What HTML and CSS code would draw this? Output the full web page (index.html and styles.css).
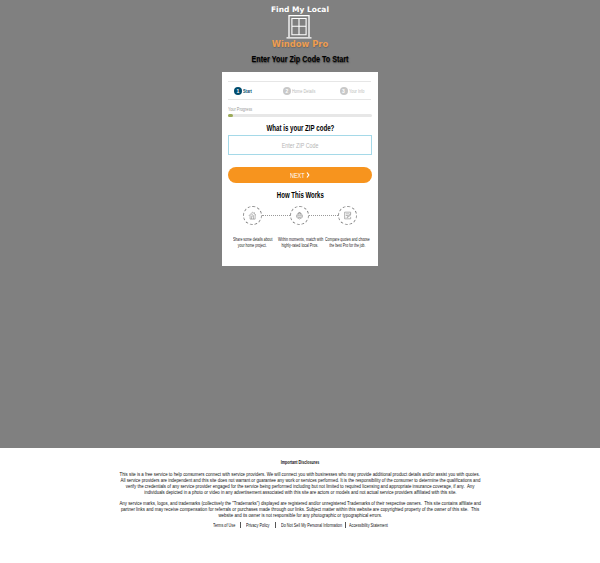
FILE: index.html
```
<!DOCTYPE html>
<html lang="en">
<head>
<meta charset="utf-8">
<title>Find My Local Window Pro</title>
<link rel="stylesheet" href="styles.css">
</head>
<body>
<main class="hero">
  <header class="brand">
    <div class="brand-top">Find My Local</div>
    <svg class="brand-icon" viewBox="0 0 26 24" fill="none" stroke="#fff">
      <path d="M3 22V.7h20V22M.5 22.9h25" stroke-width="1.3"/>
      <path d="M5.9 3.5h14.2v16.3H5.9zM13 3.5v16.3M5.9 11.3h14.2" stroke-width="1.1"/>
    </svg>
    <div class="brand-bottom">Window Pro</div>
  </header>
  <h1 class="headline"><span>Enter Your Zip Code To Start</span></h1>
  <section class="card">
    <ol class="steps">
      <li class="step active"><b>1</b><span>Start</span></li>
      <li class="step"><b>2</b><span>Home Details</span></li>
      <li class="step"><b>3</b><span>Your Info</span></li>
    </ol>
    <div class="progress-label"><span>Your Progress</span></div>
    <div class="progress"><div class="progress-fill"></div></div>
    <h2 class="question"><span>What is your ZIP code?</span></h2>
    <div class="zip"><span>Enter ZIP Code</span></div>
    <div class="next"><span>NEXT</span>
      <svg viewBox="0 0 4 6" fill="none" stroke="#fff" stroke-width="1.2"><path d="M1 .5 2.8 3 1 5.5"/></svg>
    </div>
    <h2 class="how"><span>How This Works</span></h2>
    <div class="flow">
      <div class="circle"><svg viewBox="0 0 10 10"><path d="M1 5.3 5 1.3l3.8 3.2M2.3 4.5V9h5.6V4M4 9V6l2-1v4M7.2 2.8V1.5M3.5 4.5l2-1.2"/></svg></div>
      <i class="link"></i>
      <div class="circle"><svg viewBox="0 0 10 10"><path d="M2 5.3a3 3 0 0 1 6 0M4.2 5V1.6h1.6V5M1.2 5.5h7.6M2 5.7v1.5Q5 10.5 8 7.2V5.7M3.5 7.2h3"/></svg></div>
      <i class="link"></i>
      <div class="circle"><svg viewBox="0 0 10 10"><path d="M8.5 4V1.3H1.8v7.4h6.7V6.5M3 3.2h4.2M3 5h2.5M4.8 7.5 5.2 6l3.6-3M5 7.3l3.9-3.2M3 7h.7"/></svg></div>
    </div>
    <div class="captions">
      <p><span>Share some details about</span><span>your home project.</span></p>
      <p><span>Within moments, match with</span><span>highly-rated local Pros.</span></p>
      <p><span>Compare quotes and choose</span><span>the best Pro for the job.</span></p>
    </div>
  </section>
</main>
<footer class="footer">
  <h3><span>Important Disclosures</span></h3>
  <p>
    <span class="l1">This site is a free service to help consumers connect with service providers. We will connect you with businesses who may provide additional product details and/or assist you with quotes.</span>
    <span class="l2">All service providers are independent and this site does not warrant or guarantee any work or services performed. It is the responsibility of the consumer to determine the qualifications and</span>
    <span class="l3">verify the credentials of any service provider engaged for the service being performed including but not limited to required licensing and appropriate insurance coverage, if any.&nbsp; Any</span>
    <span class="l4">individuals depicted in a photo or video in any advertisement associated with this site are actors or models and not actual service providers affiliated with this site.</span>
  </p>
  <p>
    <span class="l5">Any service marks, logos, and trademarks (collectively the "Trademarks") displayed are registered and/or unregistered Trademarks of their respective owners.&nbsp; This site contains affiliate and</span>
    <span class="l6">partner links and may receive compensation for referrals or purchases made through our links. Subject matter within this website are copyrighted property of the owner of this site.&nbsp; This</span>
    <span class="l7">website and its owner is not responsible for any photographic or typographical errors.</span>
  </p>
  <nav class="links"><a><span>Terms of Use</span></a><a><span>Privacy Policy</span></a><a><span>Do Not Sell My Personal Information</span></a><a><span>Accessibility Statement</span></a></nav>
</footer>
</body>
</html>
```
FILE: styles.css
```
* { box-sizing: border-box; margin: 0; padding: 0; }
body { width: 600px; height: 563px; overflow: hidden; background: #fff; color: #111; font-family: "Liberation Sans", sans-serif; }
.hero { height: 448px; background: #808080; padding-top: 5px; display: flex; flex-direction: column; align-items: center; }
.brand { display: flex; flex-direction: column; align-items: center; font-family: "DejaVu Sans", sans-serif; font-weight: bold; white-space: nowrap; }
.brand-top { color: #fff; font-size: 7.5px; line-height: 10px; }
.brand-icon { width: 26px; height: 24px; display: block; margin-right: 3px; }
.brand-bottom { color: #ee9d50; font-size: 8.4px; line-height: 11px; text-shadow: .5px .5px 1px #666; }
.headline { margin-top: 2px; font-size: 9.6px; line-height: 13px; color: #000; text-shadow: .5px .5px 1.5px #333; white-space: nowrap; }
.headline span, .question span, .how span { display: inline-block; transform: scaleX(.745); }
.card { width: 156px; height: 194px; margin-top: 7px; padding: 9px 6px 0; background: #fff; white-space: nowrap; }
.steps { width: 143px; height: 19px; list-style: none; display: grid; grid-template-columns: 49px 56.5px 1fr; align-items: center; border: solid #e6e6e6; border-width: 1px 0; padding-left: 6px; }
.step { display: flex; align-items: center; gap: 1.4px; font-size: 5px; color: #bbb; }
.step span { transform: scaleX(.78); transform-origin: left; }
.step b { flex: none; width: 8px; height: 8px; border-radius: 50%; background: #c8c8c8; color: #fff; font-size: 5px; line-height: 8px; text-align: center; }
.step.active { color: #004c6d; font-weight: bold; }
.active b { background: #004c6d; }
.progress-label { margin-top: 6px; height: 7px; line-height: 6px; font-size: 5px; color: #999; }
.progress-label span { display: block; transform: scaleX(.77); transform-origin: left; }
.progress { height: 3px; margin-top: 1px; background: #e7e7e7; border-radius: 1.5px; }
.progress-fill { width: 4.5px; height: 3px; background: #9cab58; border-radius: 1.5px; }
.question { margin-top: 5px; font-size: 8.6px; line-height: 12px; text-align: center; color: #000; }
.question span { transform: scaleX(.715); }
.zip { height: 20px; margin-top: 1px; border: 1px solid #a5d9e8; display: flex; justify-content: center; align-items: center; color: #b5b5b5; font-size: 7.3px; }
.zip span { transform: scaleX(.73); }
.next { height: 16px; margin-top: 12px; border-radius: 8px; background: #f7941e; color: #fff; display: flex; justify-content: center; align-items: center; font-size: 7.5px; }
.next span { width: 15.5px; transform: scaleX(.73); transform-origin: left; }
.next svg { width: 4px; height: 6px; margin-left: 1px; }
.how { margin-top: 6px; font-size: 8.6px; line-height: 12px; text-align: center; color: #000; }
.how span { transform: scaleX(.705); }
.flow { margin-top: 5px; padding: 0 15px 0 14.5px; display: flex; align-items: center; }
.circle { width: 19px; height: 19px; border: 1px dashed #888; border-radius: 50%; display: grid; place-items: center; }
.circle svg { width: 9px; height: 9px; fill: none; stroke: #777; stroke-width: .6; }
.link { flex: 1; border-top: 1px dotted #999; }
.captions { margin: 12px 0 0 .5px; display: grid; grid-template-columns: repeat(3, 47.5px); font-size: 4.9px; line-height: 5.5px; color: #222; }
.captions p { display: flex; flex-direction: column; align-items: center; }
.captions span { transform: scaleX(.71); }
.captions p:nth-child(2) { padding-left: 1px; }
.captions p:nth-child(2) span { transform: scaleX(.74); }
.footer { padding-top: 12px; text-align: center; font-size: 5.6px; line-height: 6px; }
.footer h3 { font-size: 4.9px; line-height: 6px; }
.footer h3 span { display: block; transform: scaleX(.75); }
.footer p { margin-top: 5px; white-space: nowrap; display: flex; flex-direction: column; align-items: center; }
.footer h3 + p { margin-top: 4.5px; }
.l1 { transform: scaleX(.781); }
.l2 { transform: scaleX(.777); }
.l3 { transform: scaleX(.785); }
.l4 { transform: scaleX(.783); }
.l5 { transform: scaleX(.775); }
.l6 { transform: scaleX(.789); }
.l7 { transform: scaleX(.777); }
.links { width: 176px; margin: 4px auto 0 213px; display: grid; grid-template-columns: 27px 35px 70px 44px; font-size: 5px; line-height: 6px; white-space: nowrap; }
.links span { display: block; width: max-content; transform: scaleX(.755); transform-origin: left; }
.links a + a { padding-left: 4.5px; border-left: 1px solid #555; }
.links a:last-child { padding-left: 3px; }
```
